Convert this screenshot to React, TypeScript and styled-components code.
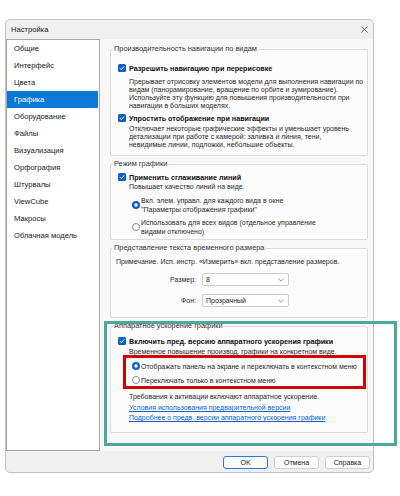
import React from "react";
import styled, { createGlobalStyle } from "styled-components";

const GlobalStyle = createGlobalStyle`
  html, body {
    margin: 0;
    padding: 0;
    background: #ffffff;
  }
  body {
    font-family: "Liberation Sans", Arial, sans-serif;
    font-size: 7px;
    color: #1b1b1b;
  }
  * {
    box-sizing: border-box;
  }
`;

const Page = styled.div`
  position: relative;
  width: 400px;
  height: 496px;
  padding: 19px 0 0 5px;
`;

const Dialog = styled.div`
  width: 369px;
  height: 454px;
  border: 1px solid #c2c2c2;
  border-radius: 5px;
  background: #f0f0f0;
  display: flex;
  flex-direction: column;
  overflow: hidden;
`;

const TitleBar = styled.div`
  height: 19px;
  flex-shrink: 0;
  display: flex;
  align-items: center;
  justify-content: space-between;
  padding: 0 5px;
  font-size: 7.6px;
  color: #1a1a1a;
`;

const Main = styled.div`
  display: flex;
  height: 412px;
`;

const Sidebar = styled.ul`
  width: 94px;
  margin: 0;
  padding: 0;
  list-style: none;
  background: #ffffff;
  border: 1px solid #a6a6a6;
`;

const NavItem = styled.li<{ $active?: boolean }>`
  height: 17px;
  margin-right: 1px;
  padding-left: 7px;
  display: flex;
  align-items: center;
  font-size: 7.6px;
  color: ${(p) => (p.$active ? "#ffffff" : "#202020")};
  background: ${(p) => (p.$active ? "#0a78d4" : "transparent")};
`;

const Content = styled.div`
  flex: 1;
  padding: 10px 5px 0 10px;
  background: #f8f8f8;
  display: flex;
  flex-direction: column;
  gap: 8px;
`;

const Group = styled.div<{ $pt: number; $pb: number }>`
  position: relative;
  width: 258px;
  border: 1px solid #dcdcdc;
  border-radius: 2px;
  background: #fcfcfc;
  padding: ${(p) => p.$pt}px 4px ${(p) => p.$pb}px 7px;
`;

const Legend = styled.span`
  position: absolute;
  top: -6px;
  left: 2px;
  padding: 0 1px;
  font-size: 7.4px;
  line-height: 10px;
  color: #333333;
  white-space: nowrap;
  background: linear-gradient(#f8f8f8 50%, #fcfcfc 50%);
`;

const CheckRow = styled.div<{ $mt?: number }>`
  display: flex;
  align-items: center;
  gap: 3px;
  height: 10px;
  margin-top: ${(p) => p.$mt ?? 0}px;
  font-size: 7.2px;
  font-weight: bold;
  color: #111111;
  white-space: nowrap;
`;

const Desc = styled.div<{ $mt?: number; $indent?: number }>`
  margin: ${(p) => p.$mt ?? 2}px 0 0 ${(p) => p.$indent ?? 11}px;
  line-height: 8px;
  color: #2a2a2a;
  white-space: nowrap;
`;

const RadioRow = styled.div<{ $mt?: number; $indent?: number }>`
  display: flex;
  align-items: center;
  gap: 1px;
  min-height: 10px;
  margin: ${(p) => p.$mt ?? 0}px 0 0 ${(p) => p.$indent ?? 14}px;
  line-height: 9px;
  color: #2a2a2a;
  white-space: nowrap;

  svg {
    flex-shrink: 0;
  }
`;

const Highlight = styled.div`
  width: 243px;
  margin: -1px 0 0 5px;
  padding: 3px 0 1px;
  border: 3px solid #d30000;
`;

const FieldRow = styled.div<{ $mt: number }>`
  display: flex;
  align-items: center;
  gap: 6px;
  height: 13px;
  margin-top: ${(p) => p.$mt}px;
`;

const FieldLabel = styled.span`
  width: 78px;
  text-align: right;
  color: #2a2a2a;
`;

const Select = styled.div`
  width: 87px;
  height: 13px;
  display: flex;
  align-items: center;
  justify-content: space-between;
  padding: 0 4px 0 3px;
  background: #ffffff;
  border: 1px solid #cdcdcd;
  border-radius: 2px;
  color: #1b1b1b;
`;

const LinkText = styled.a<{ $mt: number }>`
  display: block;
  margin: ${(p) => p.$mt}px 0 0 11px;
  line-height: 8px;
  color: #0a5fc8;
  text-decoration: underline;
  white-space: nowrap;
`;

const Footer = styled.div`
  height: 21px;
  display: flex;
  justify-content: flex-end;
  align-items: flex-start;
  gap: 6px;
  padding: 5px 3px 0 0;
`;

const Button = styled.button<{ $primary?: boolean }>`
  width: 45px;
  height: 13px;
  padding: 0;
  font-family: inherit;
  font-size: 7px;
  color: #1b1b1b;
  background: #fdfdfd;
  border: 1px solid ${(p) => (p.$primary ? "#2a78d2" : "#cfcfcf")};
  border-radius: 3px;
`;

const Callout = styled.div`
  position: absolute;
  left: 104px;
  top: 321px;
  width: 293px;
  height: 125px;
  border: 3px solid #4ea797;
  pointer-events: none;
`;

const CheckIcon = () => (
  <svg width="8" height="8" viewBox="0 0 8 8">
    <rect width="8" height="8" rx="1.5" fill="#0f5fc2" />
    <path d="M1.8 4.1 L3.3 5.6 L6.2 2.4" stroke="#ffffff" strokeWidth="1" fill="none" />
  </svg>
);

const RadioIcon = ({ checked }: { checked?: boolean }) =>
  checked ? (
    <svg width="8" height="8" viewBox="0 0 8 8">
      <circle cx="4" cy="4" r="4" fill="#0f5fc2" />
      <circle cx="4" cy="4" r="1.7" fill="#ffffff" />
    </svg>
  ) : (
    <svg width="8" height="8" viewBox="0 0 8 8">
      <circle cx="4" cy="4" r="3.5" fill="#ffffff" stroke="#6e6e6e" strokeWidth="0.8" />
    </svg>
  );

const Chevron = () => (
  <svg width="6" height="4" viewBox="0 0 6 4">
    <path d="M0.5 0.8 L3 3.2 L5.5 0.8" stroke="#777777" strokeWidth="0.8" fill="none" />
  </svg>
);

const CloseIcon = () => (
  <svg width="7" height="7" viewBox="0 0 7 7">
    <path d="M0.5 0.5 L6.5 6.5 M6.5 0.5 L0.5 6.5" stroke="#333333" strokeWidth="0.8" />
  </svg>
);

const navItems = [
  "Общие",
  "Интерфейс",
  "Цвета",
  "Графика",
  "Оборудование",
  "Файлы",
  "Визуализация",
  "Орфография",
  "Штурвалы",
  "ViewCube",
  "Макросы",
  "Облачная модель",
];

function App() {
  return (
    <>
      <GlobalStyle />
      <Page>
        <Dialog>
          <TitleBar>
            <span>Настройка</span>
            <CloseIcon />
          </TitleBar>
          <Main>
            <Sidebar>
              {navItems.map((item) => (
                <NavItem key={item} $active={item === "Графика"}>
                  {item}
                </NavItem>
              ))}
            </Sidebar>
            <Content>
              <Group $pt={13} $pb={6}>
                <Legend>Производительность навигации по видам</Legend>
                <CheckRow>
                  <CheckIcon />
                  Разрешить навигацию при перерисовке
                </CheckRow>
                <Desc $mt={5}>
                  Прерывает отрисовку элементов модели для выполнения навигации по
                  <br />
                  видам (панорамирование, вращение по орбите и зумирование).
                  <br />
                  Используйте эту функцию для повышения производительности при
                  <br />
                  навигации в больших моделях.
                </Desc>
                <CheckRow $mt={3}>
                  <CheckIcon />
                  Упростить отображение при навигации
                </CheckRow>
                <Desc>
                  Отключает некоторые графические эффекты и уменьшает уровень
                  <br />
                  детализации при работе с камерой: заливка и линия, тени,
                  <br />
                  невидимые линии, подложки, небольшие объекты.
                </Desc>
              </Group>

              <Group $pt={7} $pb={3}>
                <Legend>Режим графики</Legend>
                <CheckRow>
                  <CheckIcon />
                  Применить сглаживание линий
                </CheckRow>
                <Desc $mt={1}>Повышает качество линий на виде.</Desc>
                <RadioRow $mt={5}>
                  <RadioIcon checked />
                  <span>
                    Вкл. элем. управл. для каждого вида в окне
                    <br />
                    "Параметры отображения графики"
                  </span>
                </RadioRow>
                <RadioRow $mt={4}>
                  <RadioIcon />
                  <span>
                    Использовать для всех видов (отдельное управление
                    <br />
                    видами отключено)
                  </span>
                </RadioRow>
              </Group>

              <Group $pt={9} $pb={10}>
                <Legend>Представление текста временного размера</Legend>
                <Desc $mt={0} $indent={-2}>
                  Примечание. Исп. инстр. «Измерить» вкл. представление размеров.
                </Desc>
                <FieldRow $mt={7}>
                  <FieldLabel>Размер:</FieldLabel>
                  <Select>
                    <span>8</span>
                    <Chevron />
                  </Select>
                </FieldRow>
                <FieldRow $mt={8}>
                  <FieldLabel>Фон:</FieldLabel>
                  <Select>
                    <span>Прозрачный</span>
                    <Chevron />
                  </Select>
                </FieldRow>
              </Group>

              <Group $pt={9} $pb={10}>
                <Legend>Аппаратное ускорение графики</Legend>
                <CheckRow>
                  <CheckIcon />
                  Включить пред. версию аппаратного ускорения графики
                </CheckRow>
                <Desc>Временное повышение производ. графики на конкретном виде.</Desc>
                <Highlight>
                  <RadioRow $indent={6}>
                    <RadioIcon checked />
                    <span>Отображать панель на экране и переключать в контекстном меню</span>
                  </RadioRow>
                  <RadioRow $mt={4} $indent={6}>
                    <RadioIcon />
                    <span>Переключать только в контекстном меню</span>
                  </RadioRow>
                </Highlight>
                <Desc $mt={4}>Требования к активации включают аппаратное ускорение.</Desc>
                <LinkText $mt={3}>Условия использования предварительной версии</LinkText>
                <LinkText $mt={2}>Подробнее о предв. версии аппаратного ускорения графики</LinkText>
              </Group>
            </Content>
          </Main>
          <Footer>
            <Button $primary>OK</Button>
            <Button>Отмена</Button>
            <Button>Справка</Button>
          </Footer>
        </Dialog>
        <Callout />
      </Page>
    </>
  );
}

export default App;
